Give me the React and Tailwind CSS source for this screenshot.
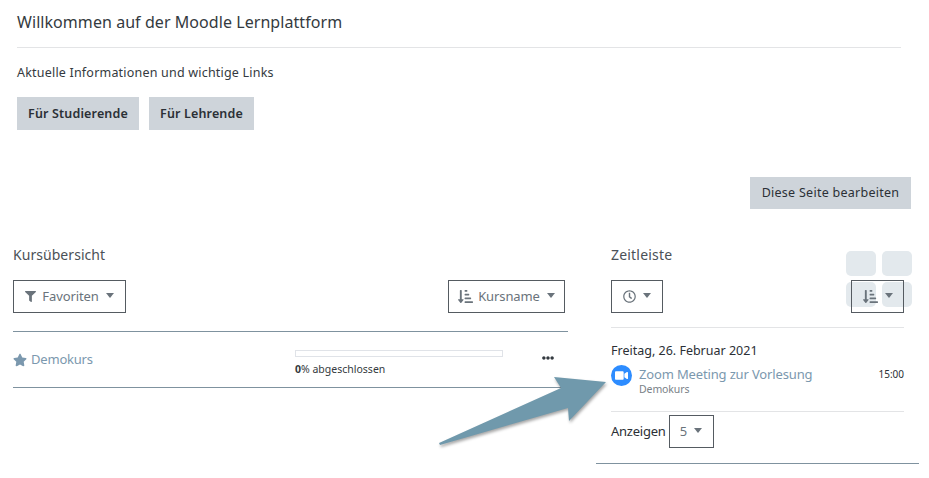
import React from 'react';
import { FaFilter, FaStar, FaRegClock, FaSortAmountDownAlt, FaVideo, FaEllipsisH } from 'react-icons/fa';

function Caret() {
  return <span className="ml-[7px] inline-block w-0 h-0 border-x-[4px] border-x-transparent border-t-[5px] border-t-[#6a737b] -translate-y-[1px]" />;
}

function OutlineButton({ className, children }) {
  return (
    <div className={`h-[33px] flex items-center justify-center border border-[#555b61] text-[13px] tracking-[-0.1px] text-[#6a737b] bg-transparent ${className}`}>
      {children}
    </div>
  );
}

export default function App() {
  return (
    <div className="relative w-[929px] h-[478px] overflow-hidden bg-white text-[#343a40] font-['Noto_Sans',sans-serif]">
      {/* Begruessung */}
      <div className="pl-[17px] pr-[28px] pt-[10px]">
        <h2 className="text-[16px] leading-[24px] tracking-[0.06px]">Willkommen auf der Moodle Lernplattform</h2>
        <div className="mt-[13px] border-t border-[#e3e4e6]" />
        <p className="mt-[16px] text-[12.5px] leading-[18px] tracking-[0.2px]">Aktuelle Informationen und wichtige Links</p>
        <div className="mt-[15px] flex gap-[10px]">
          <div className="w-[122px] h-[33px] pt-[1px] flex items-center justify-center bg-[#ced4da] text-[12.5px] tracking-[0.15px] font-semibold text-[#2b3036]">Für Studierende</div>
          <div className="w-[105px] h-[33px] pt-[1px] flex items-center justify-center bg-[#ced4da] text-[12.5px] tracking-[0.15px] font-semibold text-[#2b3036]">Für Lehrende</div>
        </div>
      </div>

      <div className="mt-[47px] flex justify-end pr-[18px]">
        <div className="w-[161px] h-[32px] pt-[1px] flex items-center justify-center bg-[#ced4da] text-[12.5px] tracking-[0.27px] text-[#2b3036]">Diese Seite bearbeiten</div>
      </div>

      <div className="mt-[34px] flex pl-[13px] pr-[10px]">
        {/* Kursuebersicht */}
        <div className="w-[555px]">
          <h5 className="text-[14px] leading-[24px] tracking-[0.05px] text-[#4b5157]">Kursübersicht</h5>
          <div className="mt-[13px] flex justify-between pr-[3px]">
            <OutlineButton className="w-[113px]">
              <FaFilter className="mr-[6px] w-[11px] h-[11px]" />Favoriten<Caret />
            </OutlineButton>
            <OutlineButton className="w-[117px]">
              <FaSortAmountDownAlt className="mr-[5px] w-[15px] h-[15px]" />Kursname<Caret />
            </OutlineButton>
          </div>
          <div className="mt-[18px] h-[57px] flex items-center border-y border-[#7f929f]">
            <div className="w-[282px] flex items-center text-[13px] tracking-[-0.2px] text-[#7b98ae]">
              <FaStar className="mr-[4px] w-[14px] h-[14px]" />Demokurs
            </div>
            <div className="w-[208px] pt-[6px]">
              <div className="h-[7px] border border-[#e0e3e8] bg-white" />
              <p className="mt-[5px] text-[10.5px] leading-[14px]"><b className="font-bold">0</b>% abgeschlossen</p>
            </div>
            <FaEllipsisH className="ml-[39px] w-[12px] h-[12px] -translate-y-[2px] text-[#343a40]" />
          </div>
        </div>

        {/* Zeitleiste */}
        <div className="ml-[28px] w-[323px]">
          <div className="px-[15px]">
            <h5 className="text-[14px] leading-[24px] tracking-[0.2px] text-[#4b5157]">Zeitleiste</h5>
            <div className="mt-[13px] flex justify-between">
              <OutlineButton className="w-[52px]">
                <FaRegClock className="w-[13px] h-[13px]" /><Caret />
              </OutlineButton>
              <OutlineButton className="relative z-10 w-[53px]">
                <FaSortAmountDownAlt className="w-[15px] h-[15px]" /><Caret />
              </OutlineButton>
            </div>
            <div className="mt-[14px] border-t border-[#e3e4e6]" />
            <p className="mt-[14px] text-[12.5px] leading-[18px] text-[#2b3036]">Freitag, 26. Februar 2021</p>
            <div className="mt-[4px] flex items-start">
              <div className="mt-[1px] w-[21px] h-[21px] rounded-full bg-[#2d8cff] flex items-center justify-center">
                <FaVideo className="w-[13px] h-[13px] text-white" />
              </div>
              <div className="ml-[7px] flex-1">
                <p className="mt-[1px] text-[13px] leading-[18px] tracking-[-0.15px] text-[#7b98ae]">Zoom Meeting zur Vorlesung</p>
                <p className="-mt-[1px] text-[10.5px] leading-[14px] tracking-[-0.1px] text-[#7a8288]">Demokurs</p>
              </div>
              <span className="mt-[2px] text-[10px] leading-[16px] text-[#2b3036]">15:00</span>
            </div>
            <div className="mt-[15px] border-t border-[#e3e4e6]" />
            <div className="mt-[3px] flex items-center">
              <span className="text-[13px] tracking-[-0.25px] text-[#2b3036]">Anzeigen</span>
              <OutlineButton className="ml-[3px] w-[45px]">5<Caret /></OutlineButton>
            </div>
          </div>
          <div className="mt-[15px] border-t border-[#7f929f]" />
        </div>
      </div>

      <div className="absolute left-[846px] top-[251px] grid grid-cols-[30px_30px] grid-rows-[25px_25px] gap-x-[6px] gap-y-[6px]">
        <div className="rounded-[5px] bg-[#e3e9ed]" />
        <div className="rounded-[5px] bg-[#e3e9ed]" />
        <div className="rounded-[5px] bg-[#e3e9ed]" />
        <div className="rounded-[5px] bg-[#e3e9ed]" />
      </div>

      {/* Pfeil */}
      <svg className="absolute left-0 top-0 z-20 pointer-events-none" width="929" height="478" viewBox="0 0 929 478">
        <polygon
          points="439,443 561,388 554,377 606,382 569,421 568,408 440,445"
          fill="#7099ac"
          style={{ filter: 'drop-shadow(1px 2px 1.5px rgba(0,0,0,0.35))' }}
        />
      </svg>
    </div>
  );
}
